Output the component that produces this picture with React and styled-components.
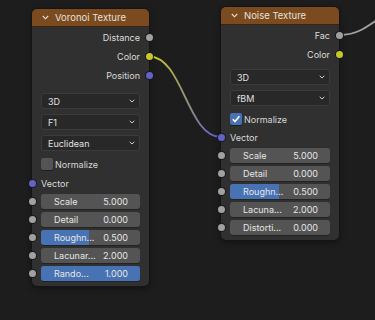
import React from "react";
import styled, { createGlobalStyle } from "styled-components";

const GREY = "#a1a1a1";
const YELLOW = "#c7c729";
const BLUE = "#6363c7";

const voronoi = {
  title: "Voronoi Texture",
  x: 32,
  y: 9,
  w: 117,
  outputs: [
    { name: "Distance", color: GREY },
    { name: "Color", color: YELLOW },
    { name: "Position", color: BLUE },
  ],
  outGap: 8,
  selects: ["3D", "F1", "Euclidean"],
  normalize: false,
  vectorGap: 4,
  fields: [
    { name: "Scale", value: "5.000" },
    { name: "Detail", value: "0.000" },
    { name: "Roughn...", value: "0.500", fill: 0.485 },
    { name: "Lacunar...", value: "2.000" },
    { name: "Rando...", value: "1.000", fill: 1 },
  ],
};

const noise = {
  title: "Noise Texture",
  x: 221,
  y: 7,
  w: 118,
  outputs: [
    { name: "Fac", color: GREY },
    { name: "Color", color: YELLOW },
  ],
  outGap: 5,
  selects: ["3D", "fBM"],
  normalize: true,
  vectorGap: 3,
  fields: [
    { name: "Scale", value: "5.000" },
    { name: "Detail", value: "0.000" },
    { name: "Roughn...", value: "0.500", fill: 0.485 },
    { name: "Lacuna...", value: "2.000" },
    { name: "Distorti...", value: "0.000" },
  ],
};

const Node = ({ node }) => (
  <NodeBox $x={node.x} $y={node.y} $w={node.w}>
    <Header>
      <svg width="7" height="5" viewBox="0 0 7 5">
        <path d="M0.8 1 L3.5 3.8 L6.2 1" fill="none" stroke="#e8e0d8" strokeWidth="1.1" />
      </svg>
      <span>{node.title}</span>
    </Header>
    <Body>
      {node.outputs.map((o) => (
        <OutputRow key={o.name}>
          {o.name}
          <Socket $color={o.color} $side="right" />
        </OutputRow>
      ))}
      <SelectGroup $mt={node.outGap}>
        {node.selects.map((s) => (
          <Select key={s}>
            {s}
            <svg width="6" height="4" viewBox="0 0 6 4">
              <path d="M0.7 0.8 L3 3 L5.3 0.8" fill="none" stroke="#cfcfcf" strokeWidth="1" />
            </svg>
          </Select>
        ))}
      </SelectGroup>
      <CheckRow>
        <CheckBox $on={node.normalize}>
          {node.normalize && (
            <svg width="10" height="10" viewBox="0 0 10 10">
              <path d="M1.8 5.2 L4 7.5 L8.4 2.2" fill="none" stroke="#fff" strokeWidth="1.6" />
            </svg>
          )}
        </CheckBox>
        Normalize
      </CheckRow>
      <InputRow $mt={node.vectorGap}>
        Vector
        <Socket $color={BLUE} $side="left" />
      </InputRow>
      <FieldGroup>
        {node.fields.map((f) => (
          <FieldRow key={f.name}>
            <Socket $color={GREY} $side="left" />
            <Field>
              {f.fill && <Fill style={{ width: `${f.fill * 100}%` }} />}
              <FieldLabel>{f.name}</FieldLabel>
              <FieldValue>{f.value}</FieldValue>
            </Field>
          </FieldRow>
        ))}
      </FieldGroup>
    </Body>
  </NodeBox>
);

const App = () => {
  return (
    <>
      <GlobalStyle />
      <Canvas>
        <Links width="375" height="320" viewBox="0 0 375 320">
          <defs>
            <linearGradient id="colorToVector" x1="149" y1="0" x2="221" y2="0" gradientUnits="userSpaceOnUse">
              <stop offset="0.1" stopColor={YELLOW} />
              <stop offset="0.9" stopColor={BLUE} />
            </linearGradient>
          </defs>
          <path d="M149 56.5 C 183 56.5, 187 137, 221 137" fill="none" stroke="url(#colorToVector)" strokeWidth="1.8" />
          <path d="M339 35 C 358 35, 366 28, 400 4" fill="none" stroke={GREY} strokeWidth="1.8" />
        </Links>
        <Node node={voronoi} />
        <Node node={noise} />
      </Canvas>
    </>
  );
};

const GlobalStyle = createGlobalStyle`
  body {
    margin: 0;
    background: #1d1d1d;
    font-family: Inter, "DejaVu Sans", sans-serif;
  }
`;

const Canvas = styled.div`
  position: relative;
  width: 375px;
  height: 320px;
  overflow: hidden;
  background: #1d1d1d;
  font-size: 9px;
  color: #dcdcdc;
`;

const Links = styled.svg`
  position: absolute;
  inset: 0;
`;

const NodeBox = styled.div`
  position: absolute;
  left: ${(p) => p.$x}px;
  top: ${(p) => p.$y}px;
  width: ${(p) => p.$w}px;
  background: #303030;
  border-radius: 5px;
  box-shadow: 0 0 0 1px #151515, 0 2px 6px rgba(0, 0, 0, 0.45);
`;

const Header = styled.div`
  height: 18px;
  display: flex;
  align-items: center;
  gap: 6px;
  padding-left: 10px;
  background: #7b4a1f;
  border-radius: 5px 5px 0 0;
  border-bottom: 1px solid #3a2512;
  box-sizing: border-box;
  color: #e6e1dc;
  font-size: 9.5px;
`;

const Body = styled.div`
  display: flex;
  flex-direction: column;
  padding: 1px 0 5px;
`;

const Socket = styled.span`
  position: absolute;
  top: 50%;
  ${(p) => (p.$side === "right" ? "right: -3.5px;" : "left: -3.5px;")}
  width: 7px;
  height: 7px;
  margin-top: -3.5px;
  border-radius: 50%;
  background: ${(p) => p.$color};
  box-shadow: 0 0 0 1px #1a1a1a;
`;

const OutputRow = styled.div`
  position: relative;
  height: 19px;
  display: flex;
  align-items: center;
  justify-content: flex-end;
  padding-right: 9px;
`;

const SelectGroup = styled.div`
  display: flex;
  flex-direction: column;
  gap: 5px;
  margin-top: ${(p) => p.$mt}px;
  padding: 0 9px;
`;

const Select = styled.div`
  height: 16px;
  box-sizing: border-box;
  display: flex;
  align-items: center;
  justify-content: space-between;
  padding: 0 4px 0 6px;
  background: #282828;
  border: 1px solid #3b3b3b;
  border-radius: 3px;
  color: #e0e0e0;
`;

const CheckRow = styled.div`
  height: 12px;
  margin-top: 7px;
  display: flex;
  align-items: center;
  gap: 2px;
  padding-left: 9px;
  color: #d6d6d6;
`;

const CheckBox = styled.span`
  width: 12px;
  height: 12px;
  border-radius: 2px;
  display: flex;
  align-items: center;
  justify-content: center;
  background: ${(p) => (p.$on ? "#4772b3" : "#545454")};
  box-shadow: 0 1px 0 #1e1e1e;
`;

const InputRow = styled.div`
  position: relative;
  height: 18px;
  margin-top: ${(p) => p.$mt}px;
  display: flex;
  align-items: center;
  padding-left: 9px;
`;

const FieldGroup = styled.div`
  display: flex;
  flex-direction: column;
  gap: 3px;
  margin-top: 2px;
`;

const FieldRow = styled.div`
  position: relative;
  padding: 0 9px;
`;

const Field = styled.div`
  position: relative;
  height: 15px;
  display: flex;
  align-items: center;
  justify-content: space-between;
  padding: 0 12px 0 13px;
  background: #545454;
  border-radius: 3px;
  overflow: hidden;
  color: #e6e6e6;
  box-shadow: 0 1px 0 #232323;
`;

const Fill = styled.span`
  position: absolute;
  left: 0;
  top: 0;
  bottom: 0;
  background: #4772b3;
`;

const FieldLabel = styled.span`
  position: relative;
`;

const FieldValue = styled.span`
  position: relative;
`;

export default App;
